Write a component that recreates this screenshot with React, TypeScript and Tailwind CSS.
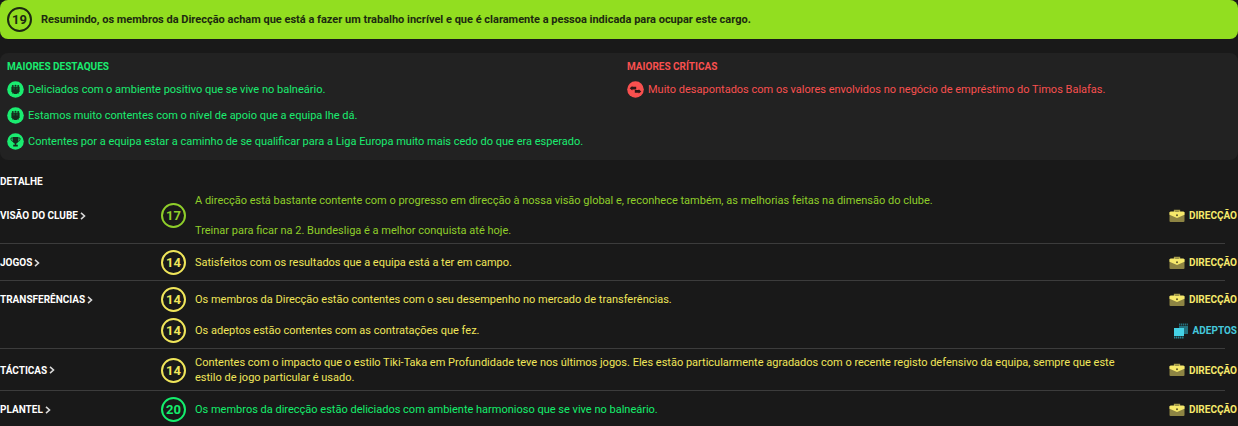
import clsx from "clsx";

type Tone = "lime" | "yellow" | "green";
type Source = "board" | "fans";

type Entry = {
  score: number;
  tone: Tone;
  text: string[];
  source: Source;
};

const tones = {
  lime: "text-[#8fce2a]",
  yellow: "text-[#f0e65a]",
  green: "text-[#14ee6c]",
};

const highlights = [
  { icon: "team", text: "Deliciados com o ambiente positivo que se vive no balneário." },
  { icon: "team", text: "Estamos muito contentes com o nível de apoio que a equipa lhe dá." },
  {
    icon: "trophy",
    text: "Contentes por a equipa estar a caminho de se qualificar para a Liga Europa muito mais cedo do que era esperado.",
  },
];

const criticisms = [
  {
    icon: "transfer",
    text: "Muito desapontados com os valores envolvidos no negócio de empréstimo do Timos Balafas.",
  },
];

const sections: { title: string; entries: Entry[] }[] = [
  {
    title: "VISÃO DO CLUBE",
    entries: [
      {
        score: 17,
        tone: "lime",
        text: [
          "A direcção está bastante contente com o progresso em direcção à nossa visão global e, reconhece também, as melhorias feitas na dimensão do clube.",
          "Treinar para ficar na 2. Bundesliga é a melhor conquista até hoje.",
        ],
        source: "board",
      },
    ],
  },
  {
    title: "JOGOS",
    entries: [
      {
        score: 14,
        tone: "yellow",
        text: ["Satisfeitos com os resultados que a equipa está a ter em campo."],
        source: "board",
      },
    ],
  },
  {
    title: "TRANSFERÊNCIAS",
    entries: [
      {
        score: 14,
        tone: "yellow",
        text: ["Os membros da Direcção estão contentes com o seu desempenho no mercado de transferências."],
        source: "board",
      },
      {
        score: 14,
        tone: "yellow",
        text: ["Os adeptos estão contentes com as contratações que fez."],
        source: "fans",
      },
    ],
  },
  {
    title: "TÁCTICAS",
    entries: [
      {
        score: 14,
        tone: "yellow",
        text: [
          "Contentes com o impacto que o estilo Tiki-Taka em Profundidade teve nos últimos jogos. Eles estão particularmente agradados com o recente registo defensivo da equipa, sempre que este estilo de jogo particular é usado.",
        ],
        source: "board",
      },
    ],
  },
  {
    title: "PLANTEL",
    entries: [
      {
        score: 20,
        tone: "green",
        text: ["Os membros da direcção estão deliciados com ambiente harmonioso que se vive no balneário."],
        source: "board",
      },
    ],
  },
];

function Score({ value, className }: { value: number; className?: string }) {
  return (
    <span
      className={clsx(
        "flex size-[25px] shrink-0 items-center justify-center rounded-full border-2 border-current text-[13px] font-bold",
        className
      )}
    >
      {value}
    </span>
  );
}

function RoundIcon({ name }: { name: string }) {
  return (
    <svg viewBox="0 0 17 17" className="size-[17px] shrink-0" aria-hidden="true">
      <circle cx="8.5" cy="8.5" r="8.3" fill="currentColor" />
      {name === "team" && (
        <g fill="#16291d">
          <circle cx="5.8" cy="5" r="1" />
          <circle cx="8.5" cy="4.8" r="1" />
          <circle cx="11.2" cy="5" r="1" />
          <path d="M4.400 5.800h8.200v5.200h-.8v1.400H9.900v.5H7.100v-.5H5.200V11h-.8z" />
          <path d="M7 6.400v2.200M10 6.400v2.200" stroke="#12a04c" strokeWidth=".6" />
        </g>
      )}
      {name === "trophy" && (
        <g fill="#16291d">
          <path d="M5.600 4h5.800v3.200c0 1.900-1 2.900-2.200 3.300v1.300h1.600v1.600H6.200v-1.600h1.600v-1.300C6.600 10.100 5.600 9.100 5.600 7.200z" />
          <path
            d="M5.600 5H4v1.200c0 1.200.8 2 2 2.200M11.400 5H13v1.200c0 1.200-.8 2-2 2.200"
            fill="none"
            stroke="#16291d"
            strokeWidth=".9"
          />
        </g>
      )}
      {name === "transfer" && (
        <g fill="#2c1616">
          <path d="M2.700 7.200 5.300 5v.8h3.900v2.800H5.300v.8z" />
          <path d="M14.300 10.400 11.700 8.200V9H7.800v2.800h3.900v.8z" />
        </g>
      )}
    </svg>
  );
}

function SourceTag({ source }: { source: Source }) {
  if (source === "fans") {
    return (
      <span className="flex w-24 shrink-0 items-center justify-end gap-1 pr-px text-[10px] font-bold text-[#45c8dc]">
        <svg viewBox="0 0 16 16" className="size-4" aria-hidden="true">
          <rect x="6" y="3" width="9" height="8" fill="#23727f" />
          <path d="M6 1.500h9" stroke="#23727f" strokeWidth="2" strokeDasharray="1.300 .6" />
          <rect x="1" y="5" width="10" height="8" fill="#45d2e6" />
          <path d="M1 14.500h10" stroke="#2a8a99" strokeWidth="2" strokeDasharray="1.300 .6" />
        </svg>
        ADEPTOS
      </span>
    );
  }
  return (
    <span className="flex w-24 shrink-0 items-center justify-end gap-1 pr-px text-[10px] font-bold text-[#f6e96b]">
      <svg viewBox="0 0 16 14" className="h-3.5 w-4" aria-hidden="true">
        <path d="M5.500 3V1.500h5V3" fill="none" stroke="#a99f4c" strokeWidth="1.300" />
        <rect x="0.500" y="3" width="15" height="10" rx="1" fill="#8d8443" />
        <path d="M1.500 2.500h13l1 1v2.300L8 9 .5 5.800V3.500z" fill="#f6e96b" />
        <circle cx="8" cy="6.300" r="1" fill="#5f5829" />
      </svg>
      DIRECÇÃO
    </span>
  );
}

function PointList({
  title,
  items,
  className,
}: {
  title: string;
  items: { icon: string; text: string }[];
  className: string;
}) {
  return (
    <div className={className}>
      <h2 className="text-[10px] leading-[13px] font-bold">{title}</h2>
      <ul className="mt-[3px]">
        {items.map((item) => (
          <li key={item.text} className="flex min-h-[26px] items-center gap-1">
            <RoundIcon name={item.icon} />
            {item.text}
          </li>
        ))}
      </ul>
    </div>
  );
}

export default function App() {
  return (
    <main className="min-h-screen bg-[#191919] font-['Roboto',sans-serif] text-[11px] leading-[15px] text-white">
      <header className="flex items-center gap-[9px] rounded-lg bg-[#92de20] p-[7px] font-bold text-[#1c2a10]">
        <Score value={19} />
        <h1>
          Resumindo, os membros da Direcção acham que está a fazer um trabalho incrível e que é claramente a pessoa
          indicada para ocupar este cargo.
        </h1>
      </header>

      <section className="mt-3.5 grid grid-cols-2 gap-0.5 rounded-lg bg-[#222222] pt-[7px] pb-1.5">
        <PointList title="MAIORES DESTAQUES" items={highlights} className="pl-[7px] text-[#1aec70]" />
        <PointList title="MAIORES CRÍTICAS" items={criticisms} className="pl-[7px] text-[#f9504f]" />
      </section>

      <h2 className="mt-4 text-[10px] leading-[11px] font-bold">DETALHE</h2>
      {sections.map((section, i) => (
        <section key={section.title}>
          {i > 0 && <hr className="mr-[13px] border-[#3c3c3c]" />}
          <div className="flex pt-[3px] pb-0.5">
            <div className="flex w-[161px] shrink-0 flex-col">
              <button
                className={clsx(
                  "flex items-center gap-0.5 text-[10px] font-bold",
                  section.entries.length > 1 ? "h-[31px]" : "grow"
                )}
              >
                {section.title}
                <svg viewBox="0 0 6 8" className="h-2 w-1.5" aria-hidden="true">
                  <path d="M1 .8 4.500 4 1 7.200" fill="none" stroke="#d8d8d8" strokeWidth="1.600" />
                </svg>
              </button>
            </div>
            <div className="grow">
              {section.entries.map((entry) => (
                <div key={entry.source} className="flex min-h-[31px] items-center gap-[9px] py-[3px]">
                  <Score value={entry.score} className={tones[entry.tone]} />
                  <div className={clsx("flex grow flex-col gap-[15px]", tones[entry.tone])}>
                    {entry.text.map((line) => (
                      <p key={line}>{line}</p>
                    ))}
                  </div>
                  <SourceTag source={entry.source} />
                </div>
              ))}
            </div>
          </div>
        </section>
      ))}
    </main>
  );
}
